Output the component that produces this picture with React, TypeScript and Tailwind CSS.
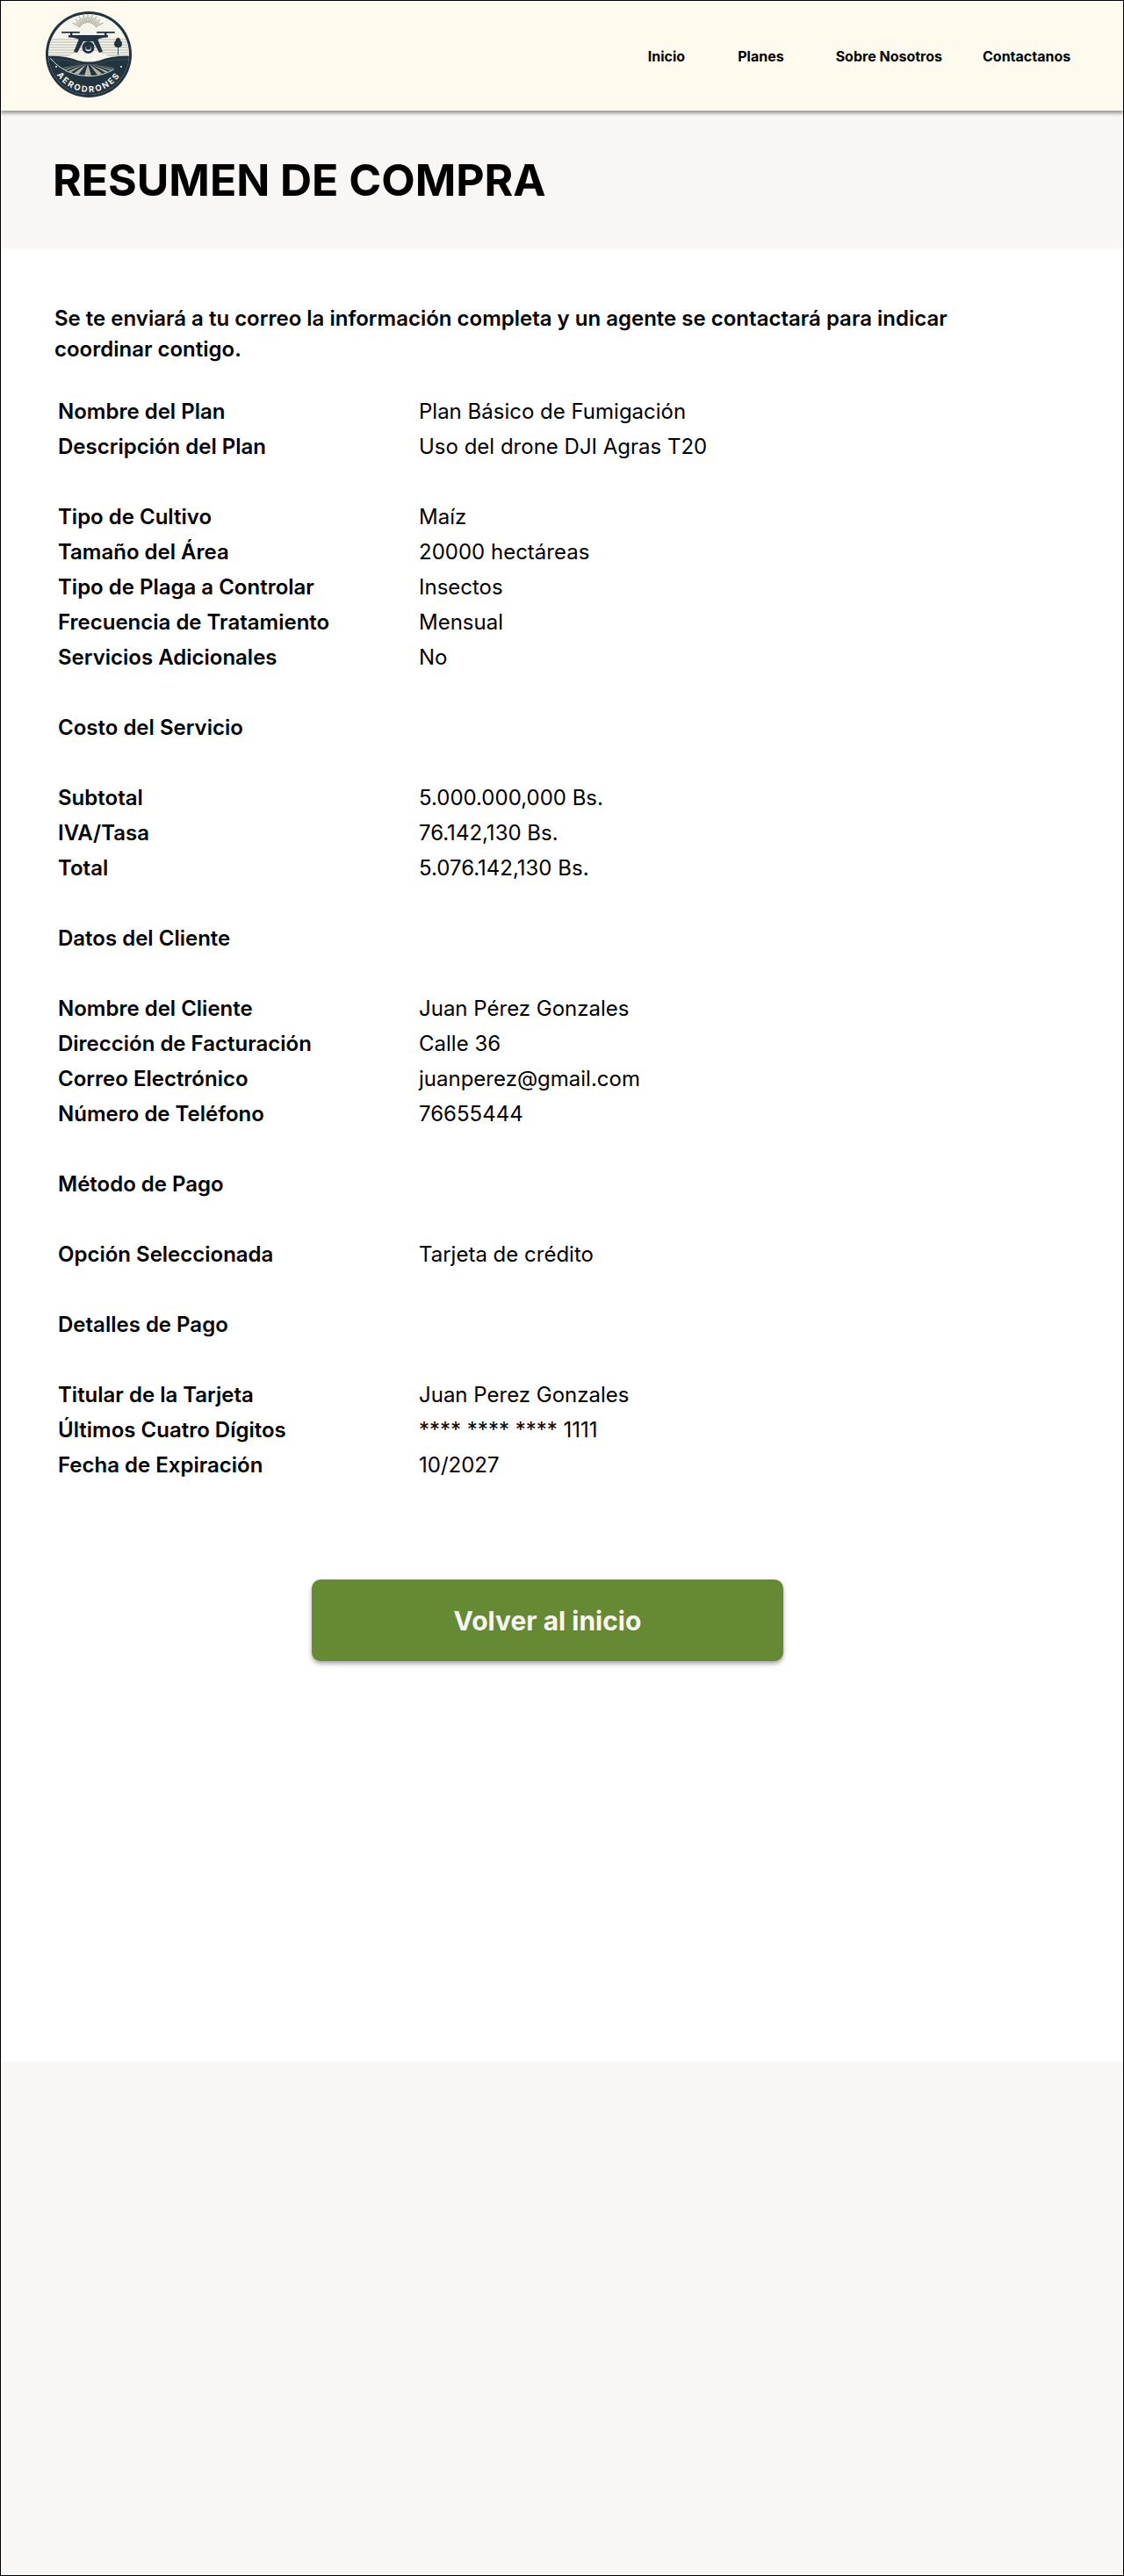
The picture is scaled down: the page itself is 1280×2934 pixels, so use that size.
const rows: [string, string][] = [
  ["Nombre del Plan", "Plan Básico de Fumigación"],
  ["Descripción del Plan", "Uso del drone DJI Agras T20"],
  ["", ""],
  ["Tipo de Cultivo", "Maíz"],
  ["Tamaño del Área", "20000 hectáreas"],
  ["Tipo de Plaga a Controlar", "Insectos"],
  ["Frecuencia de Tratamiento", "Mensual"],
  ["Servicios Adicionales", "No"],
  ["", ""],
  ["Costo del Servicio", ""],
  ["", ""],
  ["Subtotal", "5.000.000,000 Bs."],
  ["IVA/Tasa", "76.142,130 Bs."],
  ["Total", "5.076.142,130 Bs."],
  ["", ""],
  ["Datos del Cliente", ""],
  ["", ""],
  ["Nombre del Cliente", "Juan Pérez Gonzales"],
  ["Dirección de Facturación", "Calle 36"],
  ["Correo Electrónico", "juanperez@gmail.com"],
  ["Número de Teléfono", "76655444"],
  ["", ""],
  ["Método de Pago", ""],
  ["", ""],
  ["Opción Seleccionada", "Tarjeta de crédito"],
  ["", ""],
  ["Detalles de Pago", ""],
  ["", ""],
  ["Titular de la Tarjeta", "Juan Perez Gonzales"],
  ["Últimos Cuatro Dígitos", "**** **** **** 1111"],
  ["Fecha de Expiración", "10/2027"],
];

function Logo() {
  const navy = "#22343f";
  const cream = "#f6f5ec";
  const rays = Array.from({ length: 17 }, (_, i) => {
    const a = (-150 + (i * 120) / 16) * (Math.PI / 180);
    const r1 = 10;
    const r2 = i % 2 ? 17 : 20;
    return { x1: 49 + r1 * Math.cos(a), y1: 24 + r1 * Math.sin(a), x2: 49 + r2 * Math.cos(a), y2: 24 + r2 * Math.sin(a) };
  });
  const stripes = [33, 36, 39, 42, 45, 48, 51];
  const fan = [-60, -42, -27, -14, 0, 14, 27, 42, 60];
  return (
    <svg width="100" height="100" viewBox="0 0 100 100" className="mb-[3px] block">
      <defs>
        <clipPath id="inner">
          <circle cx="50" cy="50" r="46" />
        </clipPath>
        <clipPath id="field">
          <circle cx="50" cy="18" r="56" />
        </clipPath>
        <path id="arc" d="M 7 50 A 43 43 0 0 0 93 50" fill="none" />
      </defs>
      <circle cx="50" cy="50" r="49" fill={navy} />
      <circle cx="50" cy="50" r="46" fill={cream} />
      <g clipPath="url(#inner)">
        {rays.map((r, i) => (
          <line key={i} {...r} stroke="#a9aca0" strokeWidth="1.1" />
        ))}
        {stripes.map((y) => (
          <line key={y} x1="3" x2="97" y1={y} y2={y} stroke="#b4b6ac" strokeWidth="1.2" />
        ))}
        <path d="M26 53 Q38 45 50 47 Q62 45 74 53 L66 60 L34 60 Z" fill={cream} />
        <path d="M0 52 Q24 51 38 57 Q50 60 62 57 Q76 51 100 52 L100 100 L0 100 Z" fill={navy} />
        <path d="M4 56 Q24 55 38 60.5 Q50 63 62 60.5 Q76 55 96 56" fill="none" stroke="#5b6a70" strokeWidth="1" strokeDasharray="1 1" />
        <g clipPath="url(#field)">
          {fan.map((d, i) => (
            <path key={i} d={`M${49 + d * 0.12} 61 L${49 + d * 1.25 - 4.5} 76 L${49 + d * 1.25 + 4.5} 76 Z`} fill="#b5b8a3" />
          ))}
        </g>
        <circle cx="50" cy="18" r="56.8" fill="none" stroke={cream} strokeWidth="0.9" strokeDasharray="0 59 80 400" />
      </g>
      <g fill={navy}>
        <path d="M83.2 42 q-4.2 0 -4.2 -4 q0 -3 2 -4 q0 -3 2.5 -3 q2.5 0 2.5 3 q2 1 2 4 q0 4 -4 4 l0 9 l-0.8 0 Z" />
        <rect x="19" y="24" width="21" height="1.8" rx="0.9" />
        <rect x="59" y="24" width="21" height="1.8" rx="0.9" />
        <rect x="29" y="24" width="2.4" height="5" />
        <rect x="68" y="24" width="2.4" height="5" />
        <path d="M27 28 L72 28 L72 30.5 Q60 31 58 35 L41 35 Q39 31 27 30.5 Z" />
        <path d="M39 32 L33 47 L37 48 L44 35 Z" />
        <path d="M60 32 L66 47 L62 48 L55 35 Z" />
        <circle cx="49.5" cy="42" r="7" />
      </g>
      <circle cx="49.5" cy="43" r="3.2" fill={cream} />
      <circle cx="49.5" cy="42" r="2.8" fill={navy} />
      <circle cx="13" cy="64" r="1" fill={cream} />
      <circle cx="87" cy="64" r="1" fill={cream} />
      <text fill={cream} fontSize="9.5" fontWeight="700" letterSpacing="2" textAnchor="middle" fontFamily="Inter, sans-serif">
        <textPath href="#arc" startOffset="50%">AERODRONES</textPath>
      </text>
    </svg>
  );
}

export default function App() {
  return (
    <div className="box-border flex h-[2934px] flex-col border border-black bg-[#f8f7f5] font-['Inter',sans-serif] text-black">
      <header className="relative z-10 flex h-[125px] items-center justify-between bg-[#fefbee] pl-[50px] pr-[58px] shadow-[0_3px_4px_rgba(0,0,0,0.4)]">
        <Logo />
        <nav className="flex text-base font-bold">
          <a>Inicio</a>
          <a className="ml-[60px]">Planes</a>
          <a className="ml-[59px]">Sobre Nosotros</a>
          <a className="ml-[46px] w-[102px]">Contactanos</a>
        </nav>
      </header>
      <section className="flex h-[157px] items-center pl-[59px]">
        <h1 className="text-[50px] font-bold leading-none tracking-[-0.05px]">RESUMEN DE COMPRA</h1>
      </section>
      <main className="h-[2065px] bg-white pl-[61px] pr-[94px] pt-[62px]">
        <p className="max-w-[1060px] text-2xl font-semibold leading-[35px]">
          Se te enviará a tu correo la información completa y un agente se contactará para indicar coordinar contigo.
        </p>
        <div className="mt-[34px] pl-[4px] text-2xl">
          {rows.map(([label, value], i) => (
            <div key={i} className="flex h-10 items-center">
              <div className="w-[411px] shrink-0 font-semibold">{label}</div>
              <div>{value}</div>
            </div>
          ))}
        </div>
        <div className="mt-[110px] flex justify-center">
          <button className="h-[93px] w-[537px] rounded-[10px] bg-[#658a33] pt-[2px] text-[30px] font-bold text-[#f8f7f5] shadow-[0_3px_5px_rgba(0,0,0,0.35)]">
            Volver al inicio
          </button>
        </div>
      </main>
    </div>
  );
}
